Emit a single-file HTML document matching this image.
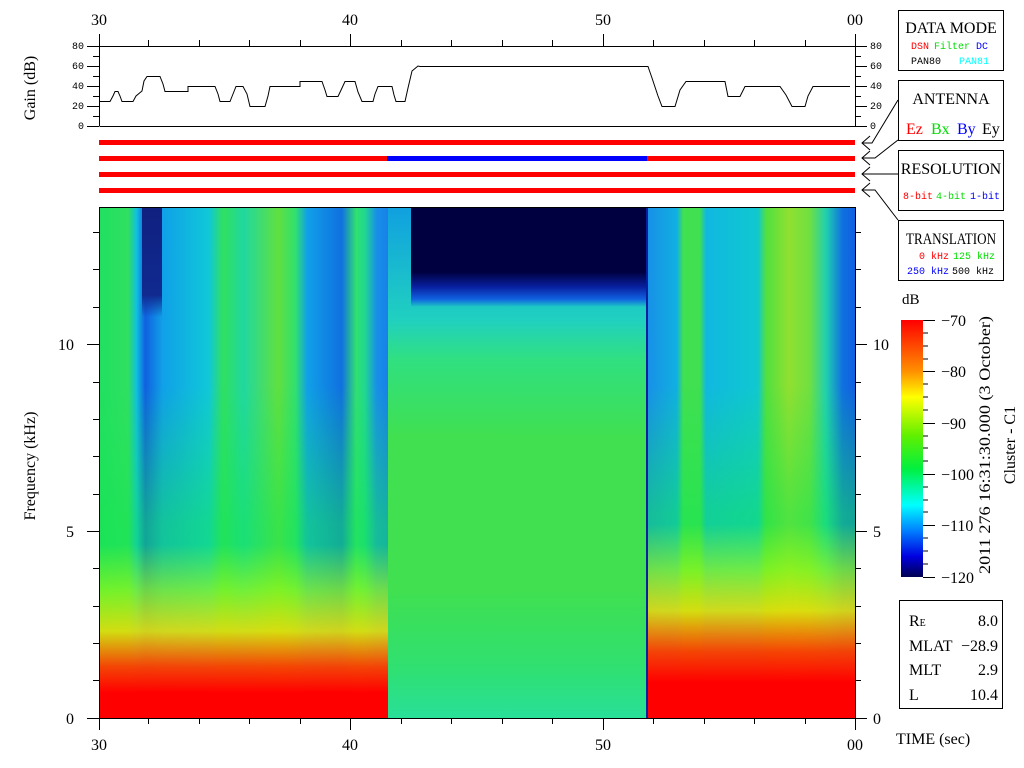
<!DOCTYPE html>
<html><head><meta charset="utf-8"><style>
body{margin:0;width:1024px;height:768px;background:#fff;overflow:hidden;position:relative;font-family:"Liberation Serif",serif}
.r{position:absolute}
.sp{position:absolute;top:207px;height:511px}
</style></head><body>
<div class="sp" style="left:99px;width:289px;background:
linear-gradient(to bottom,rgba(255,255,0,0) 0,rgba(255,255,0,0) 66%,rgba(200,255,0,.5) 75%,rgba(255,220,0,.8) 83%,rgba(255,60,0,.95) 90%,#f00 95%,#f00 100%),
linear-gradient(to bottom,rgba(0,255,120,0) 0,rgba(0,255,120,0) 35%,rgba(20,230,80,.5) 62%,rgba(20,230,80,.6) 100%),
linear-gradient(to right,#20e060 0,#30e060 10%,#10c0e0 13%,#1060e0 16%,#10a0e8 22%,#10c8d8 38%,#30e060 43%,#20d8a0 50%,#60e040 62%,#30e070 68%,#10a0e8 72%,#1070e0 84%,#30e070 89%,#20d890 92%,#1890e8 96%,#1880e8 100%)"></div>
<div class="r" style="left:142px;top:207px;width:20px;height:110px;background:linear-gradient(to bottom,#102080 0,#102a90 80%,rgba(16,60,200,0) 100%)"></div>
<div class="sp" style="left:388px;width:260px;background:
linear-gradient(to bottom,#10a0e0 0,#20d0c0 22%,#30e080 30%,#40e050 45%,#40e050 75%,#30e070 90%,#28e098 100%)"></div>
<div class="r" style="left:411px;top:207px;width:237px;height:100px;background:linear-gradient(to bottom,#000040 0,#000040 65%,#0820a0 80%,#1060e0 92%,rgba(16,150,230,0) 100%)"></div>
<div class="r" style="left:646px;top:207px;width:3px;height:511px;background:#0020a0"></div>
<div class="sp" style="left:648px;width:207px;background:
linear-gradient(to bottom,rgba(255,255,0,0) 0,rgba(255,255,0,0) 62%,rgba(200,255,0,.5) 71%,rgba(255,220,0,.8) 79%,rgba(255,60,0,.95) 87%,#f00 93%,#f00 100%),
linear-gradient(to bottom,rgba(0,255,120,0) 0,rgba(0,255,120,0) 35%,rgba(20,230,80,.5) 60%,rgba(20,230,80,.6) 100%),
linear-gradient(to right,#1890e8 0,#10b0e0 14%,#40e050 17%,#40e050 25%,#10b8e0 28%,#10c8d0 53%,#50e040 57%,#90e030 68%,#70e040 78%,#20d0b0 86%,#1070e0 94%,#1060e0 100%)"></div>
<svg class="r" style="left:0;top:0" width="1024" height="768" font-family="Liberation Serif, serif">
<g fill="none" stroke="#000" stroke-width="1">
<rect x="99.5" y="207.5" width="756" height="511"/>
<line x1="99.5" y1="46.5" x2="855.5" y2="46.5"/><line x1="99.5" y1="126.5" x2="855.5" y2="126.5"/>
<line x1="99.5" y1="34" x2="99.5" y2="126"/><line x1="855.5" y1="34" x2="855.5" y2="126"/>
<path d="M148.5 40v6M199.5 40v6M249.5 40v6M300.5 40v6M350.5 34v12M401.5 40v6M451.5 40v6M502.5 40v6M552.5 40v6M603.5 34v12M653.5 40v6M704.5 40v6M754.5 40v6M805.5 40v6"/>
<path d="M87 46.5h12M93 56.5h6M87 66.5h12M93 76.5h6M87 86.5h12M93 96.5h6M87 106.5h12M93 116.5h6M87 126.5h12"/>
<path d="M855 46.5h12M855 56.5h6M855 66.5h12M855 76.5h6M855 86.5h12M855 96.5h6M855 106.5h12M855 116.5h6M855 126.5h12"/>
<path d="M87 718.5h12M87 531.5h12M87 344.5h12M93 680.5h6M93 643.5h6M93 606.5h6M93 568.5h6M93 494.5h6M93 456.5h6M93 419.5h6M93 382.5h6M93 307.5h6M93 269.5h6M93 232.5h6"/>
<path d="M855 718.5h12M855 531.5h12M855 344.5h12M855 680.5h6M855 643.5h6M855 606.5h6M855 568.5h6M855 494.5h6M855 456.5h6M855 419.5h6M855 382.5h6M855 307.5h6M855 269.5h6M855 232.5h6"/>
<path d="M148.5 718v6M199.5 718v6M249.5 718v6M300.5 718v6M350.5 718v12M401.5 718v6M451.5 718v6M502.5 718v6M552.5 718v6M603.5 718v12M653.5 718v6M704.5 718v6M754.5 718v6M805.5 718v6M99.5 718v12M855.5 718v12"/>
<polyline points="100,101.5 110,101.5 113,96 115,91.5 118,91.5 120,96 122,101.5 133,101.5 136,96 142,91 144,81 147,76.5 160,76.5 163,84 165,91.5 188,91.5 188,86.5 215,86.5 218,94 220,101.5 230,101.5 233,94 236,86.5 243,86.5 247,94 250,106.5 265,106.5 268,96 270,86.5 300,86.5 300,81.5 322,81.5 325,90 327,96.5 338,96.5 342,88 345,81.5 355,81.5 358,92 362,101.5 373,101.5 375,94 378,86.5 392,86.5 394,95 396,101.5 405,101.5 408,88 412,71 418,66 420,66.5 648,66.5 652,78 658,96 662,106.5 675,106.5 680,90 686,81.5 725,81.5 728,96.5 740,96.5 745,86.5 780,86.5 786,95 792,106.5 805,106.5 808,96 813,86.5 850,86.5"/>
<path d="M870 136L862 143L870 150M862 143h10L898 100"/>
<path d="M870 151L862 158L870 165M862 158h13L898 140"/>
<path d="M870 167L862 174L870 181M862 174h36"/>
<path d="M870 183L862 190L870 197M862 190h13L898 220"/>
<rect x="898.5" y="10.5" width="105" height="60"/>
<rect x="898.5" y="80.5" width="105" height="60"/>
<rect x="898.5" y="150.5" width="105" height="60"/>
<rect x="898.5" y="220.5" width="105" height="60"/>
<rect x="899.5" y="600.5" width="103" height="108"/>
<path d="M923 320.5h12M923 371.5h12M923 423.5h12M923 474.5h12M923 525.5h12M923 577.5h12M923 346h5M923 397h5M923 448h5M923 500h5M923 551h5M923 333h5M923 359h5M923 384h5M923 410h5M923 436h5M923 461h5M923 487h5M923 512h5M923 538h5M923 564h5"/>
</g>
<rect x="99" y="140" width="756" height="5" fill="#f00"/>
<rect x="99" y="156" width="756" height="5" fill="#f00"/>
<rect x="387" y="156" width="260" height="5" fill="#00f"/>
<rect x="99" y="172" width="756" height="5" fill="#f00"/>
<rect x="99" y="188" width="756" height="5" fill="#f00"/>
<defs><linearGradient id="cb" x1="0" y1="0" x2="0" y2="1">
<stop offset="0" stop-color="#ff0000"/><stop offset=".2" stop-color="#ff9000"/><stop offset=".3" stop-color="#ffff00"/><stop offset=".45" stop-color="#60f000"/><stop offset=".58" stop-color="#00f040"/><stop offset=".72" stop-color="#00ffff"/><stop offset=".82" stop-color="#0080ff"/><stop offset=".92" stop-color="#0000e0"/><stop offset="1" stop-color="#000050"/></linearGradient></defs>
<rect x="901" y="320" width="22" height="257" fill="url(#cb)"/>
<g font-size="16" fill="#000">
<text x="99" y="25" text-anchor="middle">30</text><text x="350" y="25" text-anchor="middle">40</text><text x="603" y="25" text-anchor="middle">50</text><text x="855" y="25" text-anchor="middle">00</text>
<text x="99" y="750" text-anchor="middle">30</text><text x="350" y="750" text-anchor="middle">40</text><text x="603" y="750" text-anchor="middle">50</text><text x="855" y="750" text-anchor="middle">00</text>
<text x="74" y="724" text-anchor="end">0</text><text x="74" y="537" text-anchor="end">5</text><text x="74" y="350" text-anchor="end">10</text>
<text x="873" y="724">0</text><text x="873" y="537">5</text><text x="873" y="350">10</text>
<text transform="translate(35,466) rotate(-90)" text-anchor="middle">Frequency (kHz)</text>
<text transform="translate(35,88) rotate(-90)" text-anchor="middle">Gain (dB)</text>
<text x="896" y="744">TIME (sec)</text>
<text x="902" y="304" font-size="15">dB</text>
<text x="941" y="326">−70</text><text x="941" y="377">−80</text><text x="941" y="429">−90</text><text x="941" y="480">−100</text><text x="941" y="531">−110</text><text x="941" y="583">−120</text>
<text transform="translate(990,445) rotate(-90)" text-anchor="middle" textLength="258" lengthAdjust="spacingAndGlyphs">2011 276 16:31:30.000 (3 October)</text>
<text transform="translate(1015,445) rotate(-90)" text-anchor="middle">Cluster - C1</text>
<text x="951" y="33" text-anchor="middle">DATA MODE</text>
<text x="951" y="104" text-anchor="middle">ANTENNA</text>
<text x="951" y="174" text-anchor="middle">RESOLUTION</text>
<text x="906" y="244" textLength="90" lengthAdjust="spacingAndGlyphs">TRANSLATION</text>
<text x="906" y="134" fill="#f00">Ez</text><text x="931" y="134" fill="#0d0">Bx</text><text x="957" y="134" fill="#00f">By</text><text x="982" y="134">Ey</text>
<text x="909" y="626">R<tspan font-size="10">E</tspan></text><text x="998" y="626" text-anchor="end">8.0</text>
<text x="909" y="651">MLAT</text><text x="998" y="651" text-anchor="end">−28.9</text>
<text x="909" y="675">MLT</text><text x="998" y="675" text-anchor="end">2.9</text>
<text x="909" y="700">L</text><text x="998" y="700" text-anchor="end">10.4</text>
</g>
<g font-family="Liberation Mono, monospace" font-size="10">
<text x="84" y="49" text-anchor="end">80</text><text x="84" y="69" text-anchor="end">60</text><text x="84" y="89" text-anchor="end">40</text><text x="84" y="109" text-anchor="end">20</text><text x="84" y="129" text-anchor="end">0</text>
<text x="870" y="49">80</text><text x="870" y="69">60</text><text x="870" y="89">40</text><text x="870" y="109">20</text><text x="870" y="129">0</text>
<text x="911" y="49" fill="#f00">DSN</text><text x="934" y="49" fill="#0d0">Filter</text><text x="976" y="49" fill="#00f">DC</text>
<text x="911" y="64">PAN80</text><text x="959" y="64" fill="#0ff">PAN81</text>
<text x="903" y="199" fill="#f00">8-bit</text><text x="936" y="199" fill="#0d0">4-bit</text><text x="970" y="199" fill="#00f">1-bit</text>
<text x="919" y="259" fill="#f00">0 kHz</text><text x="953" y="259" fill="#0d0">125 kHz</text>
<text x="907" y="274" fill="#00f">250 kHz</text><text x="952" y="274">500 kHz</text>
</g>
</svg>
</body></html>
